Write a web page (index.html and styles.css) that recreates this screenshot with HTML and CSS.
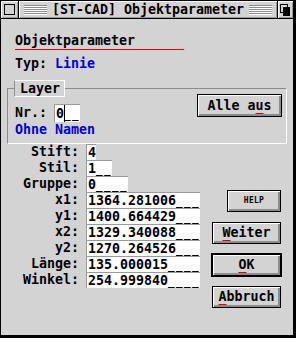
FILE: index.html
```html
<!DOCTYPE html>
<html lang="de">
<head>
    <meta charset="UTF-8">
    <title>[ST-CAD] Objektparameter</title>
    <link rel="stylesheet" href="styles.css">
</head>
<body>
    <div class="window">
        <!-- Title bar -->
        <div class="titlebar">
            <div class="closer"><span class="closer-box"></span></div>
            <div class="title">
                <span class="grip"></span>
                <span class="title-text">[ST-CAD] Objektparameter</span>
                <span class="grip"></span>
            </div>
            <div class="fuller">
                <svg width="11" height="12" viewBox="0 0 11 12">
                    <rect x="0.5" y="0.5" width="7" height="8" fill="none" stroke="#000"/>
                    <rect x="3" y="3" width="7" height="9" fill="#000"/>
                </svg>
            </div>
        </div>

        <div class="content">
            <div class="heading">Objektparameter</div>
            <div class="type">Typ: <span class="blue">Linie</span></div>

            <!-- Layer group -->
            <fieldset class="layer">
                <legend>Layer</legend>
                <div class="layer-left">
                    <div class="nr-row">
                        <span>Nr.:</span>
                        <span class="field nr">0<i class="cursor"></i><span class="blank">__</span></span>
                    </div>
                    <div class="blue">Ohne Namen</div>
                </div>
                <button class="btn alle">Alle a<u>u</u>s</button>
            </fieldset>

            <!-- Parameters -->
            <div class="lower">
                <div class="params">
                    <span class="label">Stift:</span><span class="field">4</span>
                    <span class="label">Stil:</span><span class="field">1<span class="blank">__</span></span>
                    <span class="label">Gruppe:</span><span class="field">0<span class="blank">____</span></span>
                    <span class="label">x1:</span><span class="field">1364.281006<span class="blank">___</span></span>
                    <span class="label">y1:</span><span class="field">1400.664429<span class="blank">___</span></span>
                    <span class="label">x2:</span><span class="field">1329.340088<span class="blank">___</span></span>
                    <span class="label">y2:</span><span class="field">1270.264526<span class="blank">___</span></span>
                    <span class="label">Länge:</span><span class="field">135.000015<span class="blank">____</span></span>
                    <span class="label">Winkel:</span><span class="field">254.999840<span class="blank">____</span></span>
                </div>
                <div class="buttons">
                    <button class="btn help">HELP</button>
                    <button class="btn weiter"><u>W</u>eiter</button>
                    <button class="btn ok"><u>O</u>K</button>
                    <button class="btn abbruch"><u>A</u>bbruch</button>
                </div>
            </div>
        </div>
    </div>
</body>
</html>
```

FILE: styles.css
```css
/* Basic Reset */
* {
    box-sizing: border-box;
    margin: 0;
    padding: 0;
}

body {
    font-family: "DejaVu Sans Mono", "Liberation Mono", monospace;
    font-size: 13.3px;
    font-weight: bold;
    color: #000;
    background: #d3d3d3;
}

/* Window frame */
.window {
    width: 296px;
    height: 338px;
    background: #d3d3d3;
    border-left: 1px solid #000;
    border-top: 1px solid #000;
    border-right: 3px solid #000;
    border-bottom: 3px solid #000;
}

/* Title bar */
.titlebar {
    display: flex;
    height: 18px;
    border-bottom: 1px solid #000;
}

.closer,
.title,
.fuller {
    box-shadow: inset 1px 1px 0 #fff, inset -1px -1px 0 #9a9a9a;
}

.closer {
    width: 18px;
    border-right: 1px solid #000;
    display: flex;
    align-items: center;
    justify-content: center;
}

.closer-box {
    width: 11px;
    height: 11px;
    border: 1px solid #000;
}

.title {
    flex: 1;
    display: flex;
    align-items: center;
    border-right: 1px solid #000;
}

.grip {
    flex: 1;
    height: 10px;
    margin: 0 5px;
    background: repeating-linear-gradient(#8c8c8c 0 1px, #fff 1px 2px);
}

.title-text {
    line-height: 17px;
}

.fuller {
    width: 15px;
    display: flex;
    align-items: center;
    justify-content: center;
}

/* Dialog content */
.content {
    padding: 0 6px;
}

.heading {
    width: 169px;
    margin: 14px 0 0 8px;
    line-height: 16px;
    border-bottom: 1px solid #e00000;
}

.type {
    margin: 6px 0 0 8px;
    line-height: 16px;
}

.blue {
    color: #0000cc;
    line-height: 16px;
}

/* Layer group */
.layer {
    display: flex;
    justify-content: space-between;
    align-items: flex-start;
    margin-top: 8px;
    padding: 0 4px 5px 7px;
    min-inline-size: 0;
    border: 1px solid #8c8c8c;
    border-right-color: #fff;
    border-bottom-color: #fff;
}

.layer legend {
    margin-left: -1px;
    padding: 0 4px 0 5px;
    line-height: 15px;
    border: 1px solid #fff;
    border-left-color: #8c8c8c;
}

.layer-left {
    margin-top: 7px;
}

.nr-row {
    display: flex;
    line-height: 18px;
}

.nr-row .field {
    margin-left: 7px;
    height: 18px;
    line-height: 17px;
}

.cursor {
    display: inline-block;
    width: 1px;
    height: 17px;
    margin-right: -1px;
    vertical-align: top;
    background: #000;
}

/* Fields */
.field {
    background: #fff;
    border-left: 1px solid #9a9a9a;
    border-top: 1px solid #9a9a9a;
    padding-left: 1px;
    line-height: 15px;
    white-space: pre;
}

/* empty places of an edit field, drawn as separate dashes */
.blank {
    font-size: 11px;
    letter-spacing: 1.38px;
}

.params {
    display: grid;
    grid-template-columns: 72px auto;
    grid-auto-rows: 16px;
    column-gap: 7px;
    justify-items: start;
}

.params .label {
    justify-self: end;
    line-height: 16px;
}

/* Buttons */
.lower {
    display: flex;
    align-items: flex-start;
}

.buttons {
    margin-left: auto;
    margin-right: 5px;
    padding-top: 46px;
    display: flex;
    flex-direction: column;
    align-items: flex-end;
}

.btn {
    font: inherit;
    color: #000;
    background: #d3d3d3;
    border: 1px solid #000;
    box-shadow: inset 1px 1px 0 #fff, inset -2px -2px 0 #8c8c8c;
    height: 22px;
    line-height: 20px;
    text-align: center;
    margin-right: 1px;
}

.btn u {
    text-decoration: underline;
    text-decoration-color: #e00000;
    text-decoration-thickness: 1px;
    text-underline-offset: 3px;
}

.alle {
    width: 85px;
    height: 23px;
    line-height: 21px;
    margin-top: -3px;
    margin-right: 0;
}

.help {
    width: 54px;
    font-size: 8px;
    letter-spacing: 0.3px;
    margin-bottom: 10px;
}

.weiter {
    width: 69px;
    margin-bottom: 9px;
}

.ok {
    width: 71px;
    height: 24px;
    border-width: 2px;
    margin-right: 0;
    margin-bottom: 9px;
}

.abbruch {
    width: 69px;
}
```
